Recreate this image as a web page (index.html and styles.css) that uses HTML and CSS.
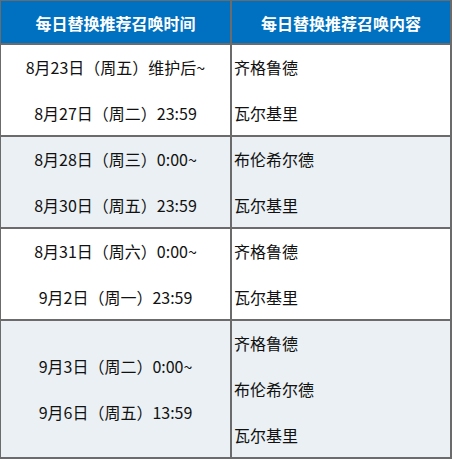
FILE: index.html
```html
<!DOCTYPE html>
<html lang="zh-CN">
<head>
<meta charset="utf-8">
<title>每日替换推荐召唤</title>
<link rel="stylesheet" href="styles.css">
</head>
<body>
<div class="schedule">
  <div class="cell head">每日替换推荐召唤时间</div>
  <div class="cell head">每日替换推荐召唤内容</div>

  <div class="cell time"><span>8月23日（周五）维护后~</span><span>8月27日（周二）23:59</span></div>
  <div class="cell hero"><span>齐格鲁德</span><span>瓦尔基里</span></div>

  <div class="cell time alt"><span>8月28日（周三）0:00~</span><span>8月30日（周五）23:59</span></div>
  <div class="cell hero alt"><span>布伦希尔德</span><span>瓦尔基里</span></div>

  <div class="cell time"><span>8月31日（周六）0:00~</span><span>9月2日（周一）23:59</span></div>
  <div class="cell hero"><span>齐格鲁德</span><span>瓦尔基里</span></div>

  <div class="cell time alt"><span>9月3日（周二）0:00~</span><span>9月6日（周五）13:59</span></div>
  <div class="cell hero alt"><span>齐格鲁德</span><span>布伦希尔德</span><span>瓦尔基里</span></div>
</div>
</body>
</html>
```
FILE: styles.css
```css
html, body {
  margin: 0;
  padding: 0;
  background: #ffffff;
}

body {
  font-family: "Noto Sans CJK SC", "Noto Sans", sans-serif;
  font-size: 16px;
  color: #111111;
}

.schedule {
  box-sizing: border-box;
  width: 452px;
  height: 459px;
  display: grid;
  grid-template-columns: 229px 218px;
  grid-template-rows: 42px 90px 90px 90px 136px;
  gap: 2px;
  padding: 1px 2px 2px 1px;
  background: #6b6b6b;
}

.cell {
  background: #ffffff;
  display: flex;
  flex-direction: column;
  justify-content: center;
  overflow: hidden;
}

.cell.alt {
  background: #eaf0f3;
}

.head {
  background: #0070c0;
  color: #ffffff;
  font-weight: bold;
  align-items: center;
  line-height: 22px;
  padding-top: 2px;
  box-sizing: border-box;
}

.time {
  align-items: center;
  line-height: 46px;
}

.hero {
  align-items: flex-start;
  padding-left: 2px;
  line-height: 46px;
}

.time span, .hero span {
  display: block;
  white-space: nowrap;
}
```
